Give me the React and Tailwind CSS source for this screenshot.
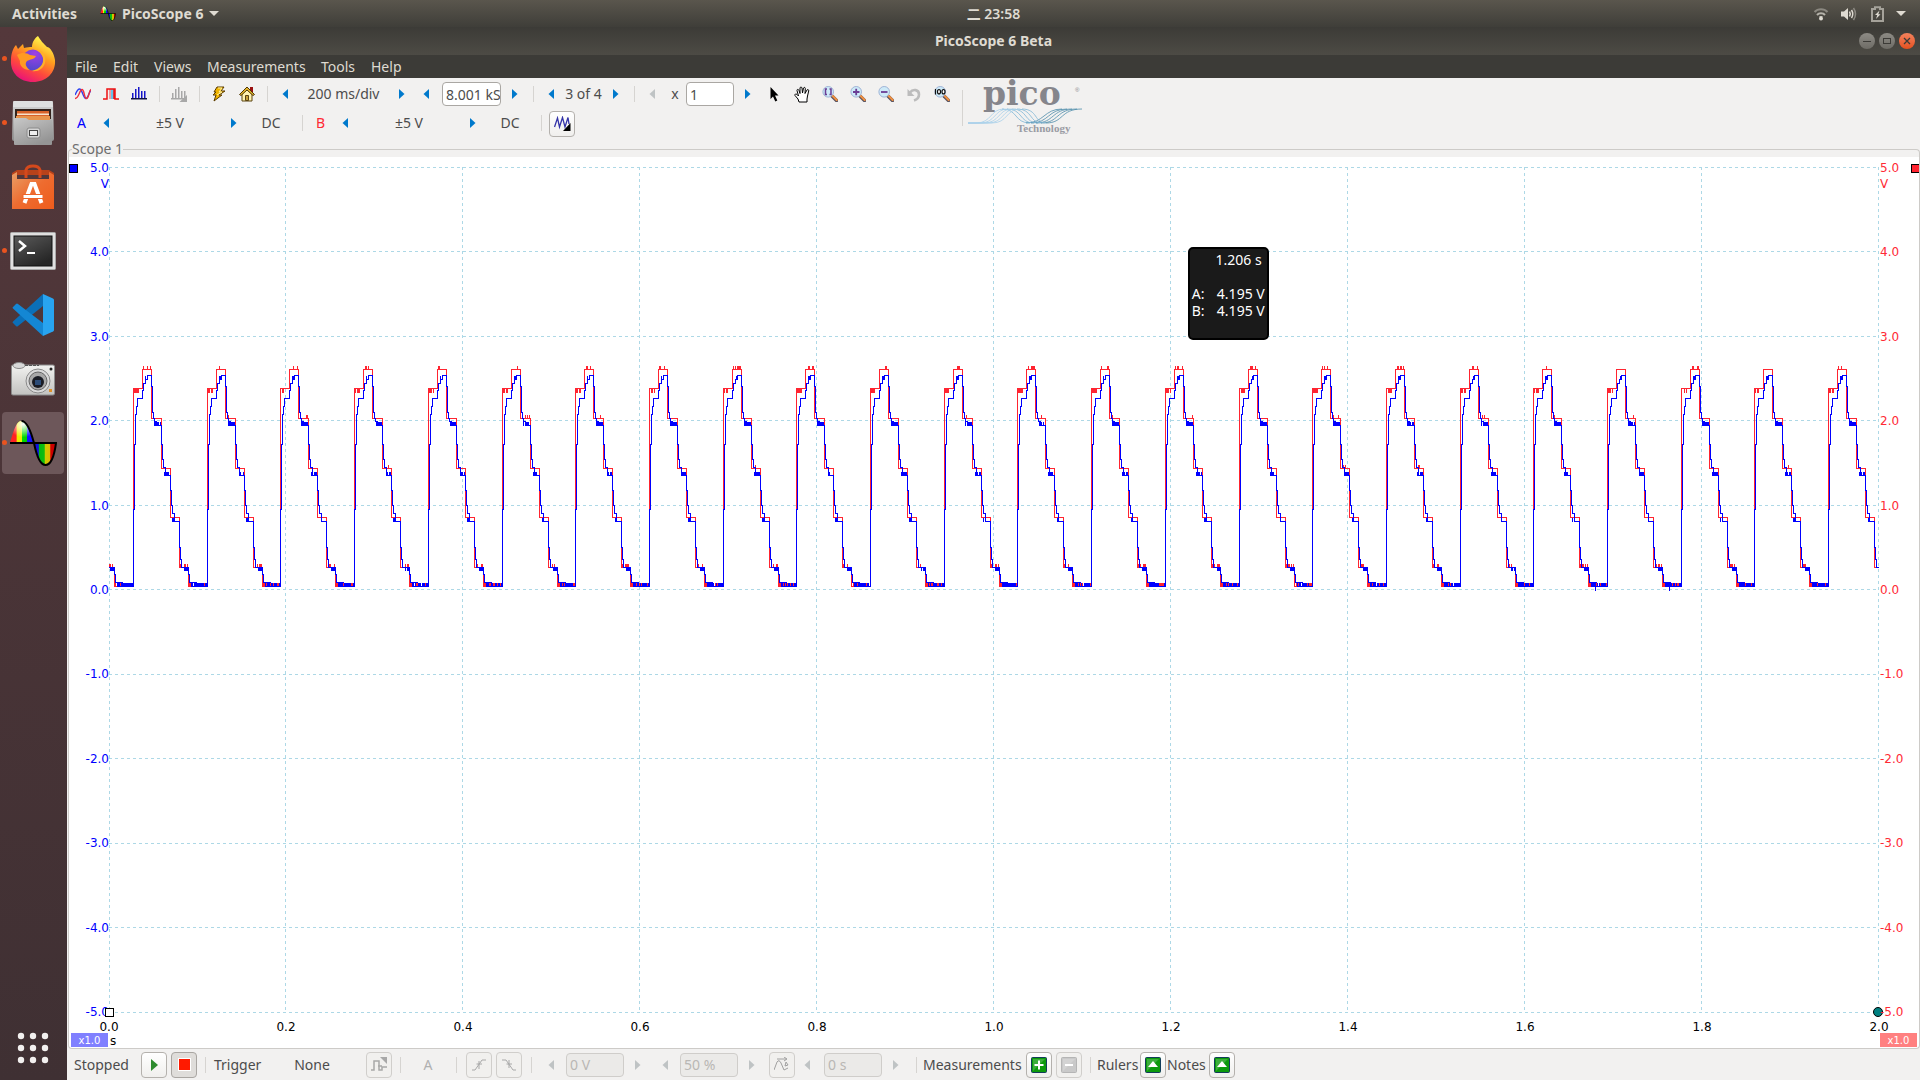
import React from "react";

const UI = "font-['Noto_Sans',sans-serif]";

/* ---------- waveform ---------- */
const PERIOD = 73.7;
const FIRST = 24;
const TOP = 167;

function makeRandom(seed) {
  let s = seed;
  return () => {
    s = (s * 16807) % 2147483647;
    return s / 2147483647;
  };
}

function buildTraces() {
  const rnd = makeRandom(4242);
  let red = "";
  let blue = "";
  const at = (x, y) => `${x + 0.5} ${Math.round(y) - TOP + 0.5}`;
  const noise = (x1, x2, y1, y2, density) => {
    let d = "";
    for (let x = x1; x < x2; x++) {
      if (rnd() < density) d += `M${at(x, y1)}V${y2 - TOP + 1}`;
    }
    return d;
  };
  const steps = (x0, pts) =>
    pts.map(([dx, y], i) => (i === 0 ? `M${at(x0 + dx, y)}` : `H${x0 + dx + 0.5}V${Math.round(y) - TOP + 0.5}`)).join("");

  for (let k = -1; k < 24; k++) {
    const x = Math.round(FIRST + PERIOD * k);
    const next = Math.round(FIRST + PERIOD * (k + 1)) - x;
    red += steps(x, [[0, 586], [0, 388], [9, 369], [18, 418], [28, 468], [37, 517], [46, 567], [55, 586], [next, 586]]);
    red += noise(x + 1, x + 6, 388, 392, 0.75);
    red += noise(x + 10, x + 18, 365, 369, 0.3);
    red += noise(x + 20, x + 28, 414, 418, 0.12);
    red += noise(x + 29, x + 36, 464, 468, 0.05);
    red += noise(x + 46, x + 55, 563, 567, 0.45);
    red += noise(x + 56, x + next, 582, 586, 0.9);
    blue += steps(x, [
      [0, 586], [0, 509], [1, 444], [2, 414], [3, 406], [4, 398], [9, 390], [10, 383], [12, 379], [14, 375],
      [18, 386], [19, 412], [20, 418], [21, 421], [23, 425], [28, 444], [29, 459], [30, 467], [32, 475],
      [37, 490], [38, 505], [39, 513], [41, 521], [46, 547], [47, 559], [48, 567], [55, 574], [56, 582], [58, 586], [next, 586],
    ]);
    blue += noise(x + 12, x + 15, 375, 379, 0.8);
    blue += noise(x + 21, x + 28, 421, 425, 0.9);
    blue += noise(x + 31, x + 37, 471, 475, 0.7);
    blue += noise(x + 39, x + 42, 517, 521, 0.6);
    blue += noise(x + 51, x + 55, 567, 570, 0.95);
    blue += noise(x + 58, x + next, 582, 586, 0.75);
    blue += `M${at(x + 57, 582)}H${x + 64}`;
    if (rnd() < 0.15) blue += `M${at(x + 62, 586)}v4`;
  }
  return { red, blue };
}
const TRACES = buildTraces();

function Plot() {
  return (
    <svg viewBox="0 0 1770 846" preserveAspectRatio="none" className="absolute inset-0 h-full w-full overflow-hidden" shapeRendering="crispEdges" fill="none" role="img" aria-label="Scope trace">
      <g stroke="#add8e6" strokeDasharray="3 3">
        {Array.from({ length: 11 }, (_, i) => (
          <line key={`h${i}`} x1="0" x2="1770" y1={Math.floor(i * 84.5) + 0.5} y2={Math.floor(i * 84.5) + 0.5} />
        ))}
        {Array.from({ length: 11 }, (_, i) => (
          <line key={`v${i}`} y1="0" y2="846" x1={Math.floor(i * 176.9) + 0.5} x2={Math.floor(i * 176.9) + 0.5} />
        ))}
      </g>
      <path d={TRACES.red} stroke="#ff2430" />
      <path d={TRACES.blue} stroke="#0000ff" />
    </svg>
  );
}

/* ---------- small controls ---------- */
function Sep({ tall }) {
  return (
    <span className="flex w-3 shrink-0 items-center justify-center">
      <span className={tall ? "h-9 w-px bg-[#d6d4d1]" : "h-4 w-px bg-[#d6d4d1]"} />
    </span>
  );
}

function Arrow({ dir, off, label }) {
  return (
    <button type="button" disabled={off} aria-label={label} className="flex w-6 shrink-0 items-center justify-center">
      <svg width="6" height="10" viewBox="0 0 6 10" fill={off ? "#bfc3c4" : "#0079cc"}>
        <path d={dir === "l" ? "M6 0V10L0.500 5Z" : "M0 0V10L5.500 5Z"} />
      </svg>
    </button>
  );
}

function Tool({ label, children }) {
  return (
    <button type="button" aria-label={label} className="flex h-6 w-7 shrink-0 items-center justify-center">
      {children}
    </button>
  );
}

function Push({ label, off, down, children }) {
  return (
    <button
      type="button"
      aria-label={label}
      disabled={off}
      className={
        "flex h-[26px] w-[26px] shrink-0 items-center justify-center rounded-[4px] border " +
        (off
          ? "border-[#d0cecb] bg-[#f1f0ee]"
          : down
          ? "border-[#a9a6a2] bg-[#dfddda]"
          : "border-[#b4b1ad] bg-linear-to-b from-white to-[#f0efed]")
      }
    >
      {children}
    </button>
  );
}

function OffField({ value, label }) {
  return (
    <input
      aria-label={label}
      defaultValue={value}
      disabled
      className="h-6 w-[58px] shrink-0 rounded-[4px] border border-[#cfcdca] bg-[#ebeae8] px-[3px] text-sm text-[#b9b7b4]"
    />
  );
}

/* ---------- toolbar icons ---------- */
const Sine = () => (
  <svg width="16" height="12" viewBox="0 0 16 12" fill="none" strokeWidth="1.400">
    <path d="M0 7C1.500 4 2.500 1 4.500 1C7.500 1 8 10.500 11 10.500C13 10.500 14 4 16 2" stroke="#2b3ff0" />
    <path d="M0 10.500C4 10.500 4.500 1.500 7 1.500S9 10.500 11.500 10.500C14 10.500 14 2.500 16 1.500" stroke="#f0303c" />
  </svg>
);
const Persist = () => (
  <svg width="16" height="12" viewBox="0 0 16 12" fill="none">
    <path d="M6 1h2v10h-2z" fill="#f49aa0" />
    <path d="M8 1h3v10h-3z" fill="#64c3ea" />
    <path d="M0 11H4V1H12V11H16M11 1V11" stroke="#ee1111" strokeWidth="1.500" />
  </svg>
);
const Bars = ({ color, corner }) => (
  <svg width="17" height="15" viewBox="0 0 17 15" fill={color}>
    <path d="M1 6h1.500v5H1zM4 2h1.500v9H4zM7 0h1.500v11H7zM10 4h1.500v7H10zM13 4h1.500v7H13z" />
    <path d="M0 11h16v1.500H0z" fill={corner ? color : "#111144"} />
    {corner && <path d="M16 8V15H8.500Z" />}
  </svg>
);
const Bolt = () => (
  <svg width="14" height="16" viewBox="0 0 14 16">
    <path d="M5 1H12L9 5H13L7 9H10L2 15L4 9H1L4 6H2Z" fill="#f0b400" stroke="#5a3a00" />
    <path d="M6 2H10L7 6H10L5 9" fill="none" stroke="#fff3a0" />
  </svg>
);
const House = () => (
  <svg width="16" height="16" viewBox="0 0 16 16">
    <path d="M11 1h3v6h-3z" fill="#9a1010" />
    <path d="M3 8V15H13V8L8 3Z" fill="#fff2b0" stroke="#5b4410" />
    <path d="M0.500 8.500L8 1L15.500 8.500L14 9.500L8 4L2 9.500Z" fill="#e6b42a" stroke="#4c3808" />
    <path d="M6.500 9.500h3v5h-3z" fill="#c9a13a" stroke="#5b4410" />
  </svg>
);
const Cursor = () => (
  <svg width="9" height="15" viewBox="0 0 9 15">
    <path d="M0.500 0V12L3 9.500L5.300 14.500L7.300 13.500L5 8.500H8.500Z" fill="#000" />
  </svg>
);
const Hand = () => (
  <svg width="17" height="17" viewBox="0 0 17 17">
    <path
      d="M5 16L4 13L1 9.500C0.500 8 2 7.500 3 8.500L4.500 10L3 4.500C3 3 4.500 3 5 4.500L6 7.500L6 2C6.200 0.700 7.700 0.700 8 2L8.500 7L9.500 2C10 1 11.300 1.300 11.300 2.500L11 7.500L13 4C13.700 3 15 3.700 14.700 5L13.500 10L13 13V16Z"
      fill="#fff" stroke="#000"
    />
  </svg>
);
function Lens({ mark }) {
  return (
    <svg width="16" height="16" viewBox="0 0 16 16" fill="none">
      <path d="M10 10L14.500 14.500" stroke="#5c5560" strokeWidth="3.500" strokeLinecap="round" />
      <path d="M10.500 9.700L14.700 14" stroke="#f09040" strokeWidth="2" strokeLinecap="round" />
      <circle cx="6.200" cy="5.800" r="5.300" fill="#cdeaf8" stroke="#9fb4d6" />
      {mark === "fit" && <path d="M5 3H3.500V8.500H5M7.500 3H9V8.500H7.500" stroke="#6a3d94" strokeWidth="1.500" />}
      {mark === "in" && <path d="M3 6H9.500M6.200 2.700V9.200" stroke="#6a3d94" strokeWidth="1.800" />}
      {mark === "out" && <path d="M3 6H9.500" stroke="#6a3d94" strokeWidth="1.800" />}
      {mark === "full" && (
        <g stroke="#111" strokeWidth="1.200">
          <path d="M1.500 3V8.500" />
          <ellipse cx="5" cy="5.700" rx="1.500" ry="2.200" fill="#fff" />
          <ellipse cx="9.500" cy="5.700" rx="1.500" ry="2.200" fill="#fff" />
        </g>
      )}
    </svg>
  );
}
const Undo = () => (
  <svg width="14" height="15" viewBox="0 0 14 15" fill="none">
    <path d="M3 5.500C6 1.500 12 2.500 12 7.500C12 10.500 10 12.500 7 13.500" stroke="#bcbcbc" strokeWidth="2.600" />
    <path d="M0.500 2V9H7.500Z" fill="#bcbcbc" />
  </svg>
);
const WaveCorner = () => (
  <svg width="17" height="15" viewBox="0 0 17 15" fill="none">
    <path d="M0.500 11L3.500 2L5.500 11L8.500 1.500L11 11L14 1.500L15 8" stroke="#3232a8" strokeWidth="1.300" />
    <path d="M16.500 7V15H9Z" fill="#000" />
  </svg>
);

function PicoLogo() {
  const lines = [0, 1, 2, 3, 4];
  return (
    <svg width="116" height="54" viewBox="0 0 116 54" fill="none" className="overflow-visible" aria-label="pico Technology" role="img">
      {lines.map((i) => (
        <g key={i} strokeWidth="0.800">
          <path d={`M0 41H${8 + i * 4}C${24 + i * 4} 41 ${22 + i * 4} 27 ${36 + i * 4} 27`} stroke="#a9d0ea" />
          <path d={`M${34 + i * 5} 27C${50 + i * 5} 27 ${46 + i * 5} 41 ${62 + i * 4} 41`} stroke="#7fb6d6" />
          <path d={`M${58 + i * 5} 41C${76 + i * 5} 41 ${76 + i * 4} 27 ${94 + i * 5} 27`} stroke="#4d8caa" />
        </g>
      ))}
      <text x="15" y="23" fontFamily="'DejaVu Serif', serif" fontWeight="bold" fontSize="33" fill="#85858b">pico</text>
      <text x="107" y="10" fontFamily="'Liberation Sans', sans-serif" fontSize="6" fill="#85858b">®</text>
      <text x="49" y="50" fontFamily="'Liberation Serif', serif" fontWeight="bold" fontSize="11" fill="#9a9ca4">Technology</text>
    </svg>
  );
}

/* ---------- dock icons ---------- */
function Rainbow({ width, height, id }) {
  return (
    <svg width={width} height={height} viewBox="0 0 48 46">
      <defs>
        <linearGradient id={id + "a"}>
          <stop offset="0.260" stopColor="#f22" />
          <stop offset="0.290" stopColor="#ee0" />
          <stop offset="0.480" stopColor="#e8f000" />
          <stop offset="0.510" stopColor="#0d0" />
          <stop offset="0.690" stopColor="#0c0" />
          <stop offset="0.720" stopColor="#11f" />
        </linearGradient>
        <linearGradient id={id + "b"}>
          <stop offset="0.200" stopColor="#11d" />
          <stop offset="0.230" stopColor="#0b1" />
          <stop offset="0.470" stopColor="#1b1" />
          <stop offset="0.500" stopColor="#cc0" />
          <stop offset="0.720" stopColor="#db0" />
          <stop offset="0.760" stopColor="#c00" />
        </linearGradient>
        <radialGradient id={id + "g"} cx="0.550" cy="0.150" r="0.600">
          <stop offset="0" stopColor="#fff" />
          <stop offset="1" stopColor="#fff" stopOpacity="0" />
        </radialGradient>
      </defs>
      <path d="M1 23C5 8 8 1 12.500 1S21 8 25 23Z" fill={`url(#${id}a)`} />
      <path d="M1 23C5 8 8 1 12.500 1S21 8 25 23Z" fill={`url(#${id}g)`} />
      <path d="M25 23C28 38 32 45 36.500 45S45 38 47 23Z" fill={`url(#${id}b)`} />
      <path d="M1 23H47C45 38 41 45 36.500 45S28 38 25 23C21 8 17 1 12.500 1" fill="none" stroke="#000" strokeWidth="2" />
    </svg>
  );
}

const Firefox = () => (
  <svg width="46" height="48" viewBox="0 0 46 48">
    <defs>
      <linearGradient id="ffo" x1="0.800" y1="0" x2="0.300" y2="1">
        <stop offset="0.100" stopColor="#fff04a" />
        <stop offset="0.400" stopColor="#ffa01e" />
        <stop offset="0.700" stopColor="#ff4a3c" />
        <stop offset="1" stopColor="#e8107c" />
      </linearGradient>
      <radialGradient id="ffp" cx="0.600" cy="0.200" r="0.900">
        <stop offset="0" stopColor="#a040e8" />
        <stop offset="1" stopColor="#4a48c8" />
      </radialGradient>
    </defs>
    <path d="M28 1C31 6 33 8 37 12C40 12 44 18 45 25C46 38 36 47 23 47S0 38 1 25C1 19 3 13 6 10L8 14L13 9L14 13C17 12 20 12 22 12C22 7 25 3 28 1Z" fill="url(#ffo)" />
    <circle cx="23" cy="25" r="10.500" fill="url(#ffp)" />
    <path d="M7 20C12 17 17 18 20 20L26 21C24 25 20 24 17 26C14 29 17 33 20 35C13 35 9 30 10 26Z" fill="#ff9a22" />
    <path d="M24 14C32 14 37 20 35 28C33 34 28 37 22 36C30 34 34 29 33 23C32 19 29 16 24 14Z" fill="#ffb02a" />
  </svg>
);

const Files = () => (
  <svg width="44" height="46" viewBox="0 0 44 46">
    <defs>
      <linearGradient id="fil" x2="0" y2="1">
        <stop offset="0" stopColor="#d8d8d8" />
        <stop offset="1" stopColor="#8f8f8f" />
      </linearGradient>
      <linearGradient id="fif" x2="0.600" y2="1">
        <stop offset="0" stopColor="#c8c8c8" />
        <stop offset="1" stopColor="#959595" />
      </linearGradient>
    </defs>
    <path d="M3 1H41Q42 1 42 2L43 39Q43 41 41 41H3Q1 41 1 39L2 2Q2 1 3 1Z" fill="url(#fil)" />
    <path d="M3 1H41L42 7H2Z" fill="#e0e0e0" />
    <path d="M4 9h36v10H4z" fill="#33231c" />
    <path d="M6 11h32v9H6z" fill="#d8622a" />
    <path d="M6 13.500h32v1.500H6z" fill="#f6e2cc" />
    <path d="M5 16h34v4H5z" fill="#e8944c" />
    <path d="M3 18H15L18 20H41V44Q41 45 40 45H4Q3 45 3 44Z" fill="url(#fif)" />
    <rect x="16" y="28" width="13" height="10" rx="2" fill="#d4d4d4" stroke="#8a8a8a" />
    <rect x="18.500" y="30.500" width="8" height="5" fill="#eee" stroke="#444" />
  </svg>
);

const Software = () => (
  <svg width="44" height="46" viewBox="0 0 44 46">
    <defs>
      <linearGradient id="sof" x2="1" y2="1">
        <stop offset="0" stopColor="#e8a068" />
        <stop offset="0.500" stopColor="#ee6c30" />
        <stop offset="1" stopColor="#ee5c1c" />
      </linearGradient>
    </defs>
    <path d="M1 9L6 6H38L43 9V11H1Z" fill="#b8421a" />
    <path d="M1 11L6 8V15H38V8L43 11V45H1Z" fill="url(#sof)" />
    <path d="M15 14V6Q16 2 22 2T29 6V14" fill="none" stroke="#d4491c" strokeWidth="3" />
    <path d="M13.500 39L20.500 20H23.500L30.500 39" fill="none" stroke="#fff" strokeWidth="4" />
    <path d="M12 30.500h20v4H12z" fill="#fff" stroke="#ee6428" strokeWidth="1" />
  </svg>
);

const Terminal = () => (
  <svg width="46" height="38" viewBox="0 0 46 38">
    <defs>
      <linearGradient id="ter" x2="0.600" y2="1">
        <stop offset="0" stopColor="#5a5a5a" />
        <stop offset="1" stopColor="#262626" />
      </linearGradient>
    </defs>
    <rect x="0.500" y="0.500" width="45" height="37" rx="1" fill="#e0e0e0" stroke="#aaa" />
    <rect x="4" y="4" width="38" height="30" fill="url(#ter)" stroke="#111" />
    <path d="M9 9L15 14L9 19" fill="none" stroke="#fff" strokeWidth="2.500" />
    <path d="M17 20h8v2h-8z" fill="#fff" />
  </svg>
);

const Code = () => (
  <svg width="44" height="44" viewBox="0 0 44 44">
    <path d="M2 30L5 33Q6 34 7 33L32 13V1L2 28.500Q1 29.500 2 30Z" fill="#0b6fb8" />
    <path d="M2 14L5 11Q6 10 7 11L32 30V43L2 15.500Q1 14.500 2 14Z" fill="#1487d4" />
    <path d="M32 1L42 5.500Q43 6 43 7V37Q43 38 42 38.500L32 43Z" fill="#28a4f0" />
  </svg>
);

const Camera = () => (
  <svg width="44" height="34" viewBox="0 0 44 34">
    <defs>
      <linearGradient id="cam" x2="0" y2="1">
        <stop offset="0" stopColor="#f2f2f0" />
        <stop offset="1" stopColor="#c2c2c0" />
      </linearGradient>
    </defs>
    <rect x="0.500" y="3" width="43" height="30" rx="1.500" fill="url(#cam)" stroke="#8c8c8c" />
    <ellipse cx="8" cy="3.500" rx="6" ry="3" fill="#d8d8d8" stroke="#8a8a8a" />
    <path d="M14 3.500H28" stroke="#555" strokeDasharray="3 1" />
    <circle cx="27" cy="19" r="12" fill="#dadada" stroke="#8a8a8a" />
    <circle cx="27" cy="19" r="9" fill="#a8a8a8" stroke="#666" />
    <circle cx="27" cy="20" r="6" fill="#1a1c24" />
    <rect x="24" y="18" width="6" height="5" fill="#2c4c78" />
    <circle cx="40" cy="7" r="1.500" fill="#222" />
    <rect x="38" y="27" width="3" height="3" fill="#e09028" />
  </svg>
);

function DockItem({ label, running, active, children }) {
  return (
    <button
      type="button"
      aria-label={label}
      className={"relative flex h-[62px] w-[62px] shrink-0 items-center justify-center rounded-[4px] " + (active ? "bg-[#6d575a]" : "")}
    >
      {running && <span className="absolute left-0 top-7 h-[5px] w-[5px] rounded-full bg-[#e95420]" />}
      {children}
    </button>
  );
}

function Dock() {
  return (
    <nav aria-label="Dock" className="flex w-[67px] shrink-0 flex-col items-start gap-0.5 bg-linear-to-b from-[#54383b] to-[#3f3033] pl-0.5 pt-px">
      <DockItem label="Firefox" running><Firefox /></DockItem>
      <DockItem label="Files" running><Files /></DockItem>
      <DockItem label="Ubuntu Software"><Software /></DockItem>
      <DockItem label="Terminal" running><Terminal /></DockItem>
      <DockItem label="Visual Studio Code"><Code /></DockItem>
      <DockItem label="Camera"><Camera /></DockItem>
      <DockItem label="PicoScope 6" running active><Rainbow width={48} height={46} id="dk" /></DockItem>
      <button type="button" aria-label="Show applications" className="mb-3.5 mt-auto flex h-9 w-[62px] items-center justify-center">
        <svg width="32" height="32" viewBox="0 0 32 32" fill="#f2f0ef">
          {[4, 16, 28].map((y) => [4, 16, 28].map((x) => <circle key={`${x}-${y}`} cx={x} cy={y} r="3.200" />))}
        </svg>
      </button>
    </nav>
  );
}

function TopBar() {
  return (
    <header className="relative flex h-[27px] shrink-0 items-center bg-linear-to-b from-[#5a564d] to-[#3f3e39] text-sm font-bold text-[#dfdbd2]">
      <button type="button" className="ml-3 w-[88px] text-left">Activities</button>
      <button type="button" className="flex items-center">
        <Rainbow width={16} height={15} id="tb" />
        <span className="ml-1.5">PicoScope 6</span>
        <svg width="10" height="5" className="ml-1.5" viewBox="0 0 10 5"><path d="M0 0H10L5 5Z" fill="#dfdbd2" /></svg>
      </button>
      <span className="absolute inset-y-0 left-[67px] right-0 flex items-center justify-center font-['Noto_Sans','Noto_Sans_CJK_SC',sans-serif] font-semibold">二 23:58</span>
      <div className="ml-auto mr-[14px] flex items-center">
        <svg width="16" height="14" viewBox="0 0 16 14" fill="none" strokeWidth="2" className="mr-3">
          <path d="M1.500 5C5 1.300 11 1.300 14.500 5" stroke="#8b8880" />
          <path d="M4 8C6 5.700 10 5.700 12 8" stroke="#b5b2aa" />
          <path d="M6 9.300h4L8 11z" fill="#dfdbd2" />
          <circle cx="8" cy="11.500" r="2" fill="#dfdbd2" />
        </svg>
        <svg width="16" height="14" viewBox="0 0 16 14" fill="none" className="mr-[14px]" stroke="#dfdbd2" strokeWidth="1.500">
          <path d="M0 4.500H3L7 1V13L3 9.500H0Z" fill="#dfdbd2" stroke="none" />
          <path d="M8.500 4.500Q10 7 8.500 9.500M10.500 3Q13 7 10.500 11" />
          <path d="M12.500 1Q16.500 7 12.500 13" stroke="#8b8880" />
        </svg>
        <svg width="13" height="16" viewBox="0 0 13 16" fill="none" className="mr-3">
          <path d="M1 3H4V1.200H9V3H12V15H1Z" stroke="#a5a29a" strokeWidth="2" />
          <path d="M8.500 4.500L4 9H6.300L5 13L9.500 8.200H7.300Z" fill="#dfdbd2" />
        </svg>
        <svg width="10" height="5" viewBox="0 0 10 5"><path d="M0 0H10L5 5Z" fill="#dfdbd2" /></svg>
      </div>
    </header>
  );
}

function TitleBar() {
  const base = "flex h-4 w-4 items-center justify-center rounded-full ";
  return (
    <div className="relative flex h-7 shrink-0 items-center justify-center bg-linear-to-b from-[#3c3b37] to-[#4d4b45] text-sm font-bold text-[#dfdbd2]">
      <h1>PicoScope 6 Beta</h1>
      <div className="absolute inset-y-0 right-[5px] flex items-center gap-1 text-[#3c3b37]">
        <button type="button" aria-label="Minimize" className={base + "bg-linear-to-b from-[#8d8b85] to-[#6e6c66]"}>
          <svg width="8" height="8" viewBox="0 0 8 8"><path d="M0 4.500H8" stroke="currentColor" /></svg>
        </button>
        <button type="button" aria-label="Maximize" className={base + "bg-linear-to-b from-[#8d8b85] to-[#6e6c66]"}>
          <svg width="8" height="8" viewBox="0 0 8 8"><rect x="0.500" y="1.500" width="7" height="5" fill="none" stroke="currentColor" /></svg>
        </button>
        <button type="button" aria-label="Close" className={base + "bg-linear-to-b from-[#f4825c] to-[#e4501c]"}>
          <svg width="8" height="8" viewBox="0 0 8 8"><path d="M1 1L7 7M7 1L1 7" stroke="currentColor" strokeWidth="1.300" /></svg>
        </button>
      </div>
    </div>
  );
}

function MenuBar() {
  const items = [
    ["File", "w-[38px]"],
    ["Edit", "w-[41px]"],
    ["Views", "w-[53px]"],
    ["Measurements", "w-[114px]"],
    ["Tools", "w-[50px]"],
    ["Help", "w-10"],
  ];
  return (
    <nav aria-label="Menu" className="flex h-[23px] shrink-0 items-center bg-[#3c3b37] pl-2 text-sm text-[#dfdbd2]">
      {items.map(([t, w]) => (
        <button key={t} type="button" className={w + " text-left"}>{t}</button>
      ))}
    </nav>
  );
}

function Channel({ name, color }) {
  return (
    <>
      <button type="button" className={"w-[25px] text-center " + color}>{name}</button>
      <Arrow dir="l" label={`Lower range ${name}`} />
      <button type="button" className="w-[104px] text-center">±5 V</button>
      <Arrow dir="r" label={`Raise range ${name}`} />
      <button type="button" className="w-[50px] text-center">DC</button>
      <Sep />
    </>
  );
}

function Toolbar() {
  return (
    <div className="flex shrink-0 text-sm text-[#4c4c4c]">
      <div className="pl-px">
        <div className="flex h-8 items-center">
          <Tool label="Scope mode"><Sine /></Tool>
          <Tool label="Persistence mode"><Persist /></Tool>
          <Tool label="Spectrum mode"><Bars color="#1414c8" /></Tool>
          <Sep />
          <Tool label="Spectrum options"><Bars color="#a8a8a8" corner /></Tool>
          <Sep />
          <Tool label="Auto setup"><Bolt /></Tool>
          <Tool label="Home"><House /></Tool>
          <Sep />
          <Arrow dir="l" label="Previous timebase" />
          <button type="button" className="w-[93px] text-center">200 ms/div</button>
          <Arrow dir="r" label="Next timebase" />
          <Arrow dir="l" label="Fewer samples" />
          <input aria-label="Samples" defaultValue="8.001 kS" className="ml-1 mr-0.5 h-6 w-[59px] rounded-[4px] border border-[#aaa7a3] bg-white pl-[3px] text-sm" />
          <Arrow dir="r" label="More samples" />
          <Sep />
          <Arrow dir="l" label="Previous buffer" />
          <span className="w-[41px] whitespace-nowrap text-center">3 of 4</span>
          <Arrow dir="r" label="Next buffer" />
          <Sep />
          <Arrow dir="l" off label="Less zoom" />
          <label htmlFor="zoomx" className="w-[22px] text-center">x</label>
          <input id="zoomx" defaultValue="1" className="mr-0.5 h-6 w-12 rounded-[4px] border border-[#aaa7a3] bg-white px-[3px] text-sm" />
          <Arrow dir="r" label="More zoom" />
          <Tool label="Select"><Cursor /></Tool>
          <Tool label="Pan"><Hand /></Tool>
          <Tool label="Zoom window"><Lens mark="fit" /></Tool>
          <Tool label="Zoom in"><Lens mark="in" /></Tool>
          <Tool label="Zoom out"><Lens mark="out" /></Tool>
          <Tool label="Undo zoom"><Undo /></Tool>
          <Tool label="Full view"><Lens mark="full" /></Tool>
        </div>
        <div className="mb-0.5 flex h-[26px] items-center">
          <Channel name="A" color="text-[#0000ff]" />
          <Channel name="B" color="text-[#ff2a35]" />
          <span className="ml-0.5 pt-px"><Push label="Signal generator"><WaveCorner /></Push></span>
        </div>
      </div>
      <Sep tall />
      <div className="pt-1"><PicoLogo /></div>
    </div>
  );
}

function AxisLabels({ side }) {
  const values = ["5.0", "4.0", "3.0", "2.0", "1.0", "0.0", "-1.0", "-2.0", "-3.0", "-4.0", "-5.0"];
  const left = side === "left";
  return (
    <ul className={"relative flex flex-col justify-between text-xs " + (left ? "items-end text-[#0000ff]" : "items-start pl-px text-[#ff2a35]")}>
      {values.map((v) => (
        <li key={v} className="flex h-0.5 items-center">{v}</li>
      ))}
      <li className={"absolute top-[9px] " + (left ? "right-0" : "left-px")}>V</li>
      <li aria-hidden="true" className={"absolute -top-[3px] h-[9px] border border-black " + (left ? "left-0 w-[9px] bg-[#0000ff]" : "right-0 w-2 border-r-0 bg-[#ff2430]")} />
    </ul>
  );
}

function Scope() {
  const times = ["0.0", "0.2", "0.4", "0.6", "0.8", "1.0", "1.2", "1.4", "1.6", "1.8", "2.0"];
  return (
    <section aria-label="Scope 1" className="flex flex-1 flex-col">
      <div className="flex h-[19px] shrink-0 items-end">
        <span className="h-2 w-1 rounded-tl-[4px] border-l border-t border-[#cdcbc8]" />
        <h2 className="flex h-4 items-center whitespace-nowrap text-sm text-[#6e6e6e]">Scope 1</h2>
        <span className="h-2 flex-1 rounded-tr-[4px] border-r border-t border-[#cdcbc8]" />
      </div>
      <div className="grid flex-1 grid-cols-[40px_1fr_40px] grid-rows-[1fr_35px] rounded-b-[4px] border-x border-b border-[#cdcbc8] bg-white pt-2.5 font-['DejaVu_Sans',sans-serif]">
        <AxisLabels side="left" />
        <div className="relative">
          <Plot />
          <span className="absolute -bottom-1 -left-1 h-[9px] w-[9px] border border-black bg-white" />
          <span className="absolute -bottom-1 -right-1 h-[10px] w-[10px] rounded-full border border-black bg-[#008080]" />
          <div className={"absolute left-[61%] top-20 -ml-px h-[93px] w-[81px] rounded-[5px] border-2 border-black bg-[#1a1a1a] px-0.5 pt-0.5 text-sm leading-[17px] text-white " + UI}>
            <p className="mb-[17px] pr-[3px] text-right">1.206 s</p>
            <p className="flex justify-between"><span>A:</span><span>4.195 V</span></p>
            <p className="flex justify-between"><span>B:</span><span>4.195 V</span></p>
          </div>
        </div>
        <AxisLabels side="right" />
        <div className="relative">
          <span className="absolute bottom-px left-0.5 flex h-[14px] w-[37px] items-center justify-center bg-[#8080ff] text-[10px] text-white">x1.0</span>
        </div>
        <div className="relative text-xs text-black">
          <ul className="flex h-[27px] items-center justify-between">
            {times.map((t) => (
              <li key={t} className="flex w-0 justify-center">{t}</li>
            ))}
          </ul>
          <span className="absolute left-px top-5">s</span>
        </div>
        <div className="relative">
          <span className="absolute bottom-px right-0.5 flex h-[14px] w-[37px] items-center justify-center bg-[#ff8080] text-[10px] text-white">x1.0</span>
        </div>
      </div>
    </section>
  );
}

const GreenBox = ({ mark, off }) => (
  <svg width="16" height="16" viewBox="0 0 16 16">
    <rect x="0.500" y="0.500" width="15" height="15" rx="1" fill={off ? "#c9c9c9" : "#0c9a0c"} stroke={off ? "#b5b5b5" : "#123c5a"} />
    <path d="M2 2H14L2 14Z" fill="#fff" opacity="0.200" />
    {mark === "+" && <path d="M8 3.500V12.500M3.500 8H12.500" stroke="#fff" strokeWidth="2" />}
    {mark === "-" && <path d="M4 8H12" stroke="#fff" strokeWidth="2" />}
    {mark === "up" && <path d="M8 4L13 10H3Z" fill="#fff" />}
  </svg>
);

function StatusBar() {
  return (
    <footer className="flex h-[31px] shrink-0 items-center whitespace-nowrap pl-[6px] text-sm text-[#4c4c4c]">
      <span className="w-[67px]">Stopped</span>
      <Push label="Start"><svg width="9" height="12" viewBox="0 0 9 12"><path d="M1 0L8 6L1 12Z" fill="#2e8b2e" /></svg></Push>
      <span className="ml-1"><Push label="Stop" down><span className="h-[11px] w-[11px] bg-[#ff1a00] ring-1 ring-white" /></Push></span>
      <span className="ml-0.5 mr-[3px]"><Sep /></span>
      <span className="w-[70px]">Trigger</span>
      <button type="button" className="w-14 text-center">None</button>
      <span className="ml-[26px]">
        <Push label="Advanced triggers" off>
          <svg width="17" height="15" viewBox="0 0 17 15" fill="none"><path d="M0 13H3V4H8V13H11V10H16M7 9h4" stroke="#a8a8a8" strokeWidth="1.500" /><path d="M9 0H16V7Z" fill="#a8a8a8" /></svg>
        </Push>
      </span>
      <span className="ml-0.5"><Sep /></span>
      <button type="button" disabled className="w-11 text-center text-[#b0b0b0]">A</button>
      <Sep />
      <span className="ml-1 flex gap-1">
        <Push label="Rising edge" off>
          <svg width="15" height="15" viewBox="0 0 15 15" fill="none" stroke="#a8a8a8"><path d="M0 13H3L10 3H14M7 4V12M4.500 7H10" /></svg>
        </Push>
        <Push label="Falling edge" off>
          <svg width="15" height="15" viewBox="0 0 15 15" fill="none" stroke="#a8a8a8"><path d="M0 3H4L11 13H14M7 3V11M4.500 7H10" /></svg>
        </Push>
      </span>
      <span className="ml-[3px] mr-0.5"><Sep /></span>
      <Arrow dir="l" off label="Lower threshold" />
      <span className="ml-[3px]"><OffField value="0 V" label="Threshold" /></span>
      <span className="ml-0.5 mr-[3px]"><Arrow dir="r" off label="Raise threshold" /></span>
      <Arrow dir="l" off label="Less pre-trigger" />
      <span className="ml-[3px]"><OffField value="50 %" label="Pre-trigger" /></span>
      <span className="ml-0.5"><Arrow dir="r" off label="More pre-trigger" /></span>
      <span className="ml-[5px]">
        <Push label="Trigger delay" off>
          <svg width="16" height="15" viewBox="0 0 16 15" fill="none" stroke="#a0a0a0"><path d="M0 13L3 5Q5 2 7 6L10 13L14 11M3 2H12M10 0L13 2L10 4M12 5L14 8L11 9Z" /></svg>
        </Push>
      </span>
      <Arrow dir="l" off label="Less delay" />
      <span className="ml-[5px]"><OffField value="0 s" label="Delay" /></span>
      <span className="mx-0.5"><Arrow dir="r" off label="More delay" /></span>
      <Sep />
      <span className="w-[104px] pl-px">Measurements</span>
      <Push label="Add measurement"><GreenBox mark="+" /></Push>
      <span className="ml-1"><Push label="Delete measurement" off><GreenBox mark="-" off /></Push></span>
      <span className="ml-0.5"><Sep /></span>
      <span className="w-11 pl-px">Rulers</span>
      <Push label="Show rulers"><GreenBox mark="up" /></Push>
      <span className="w-[43px] pl-px">Notes</span>
      <Push label="Show notes"><GreenBox mark="up" /></Push>
    </footer>
  );
}

export default function App() {
  return (
    <div className={"flex min-h-screen flex-col bg-[#f2f1f0] " + UI}>
      <TopBar />
      <div className="flex flex-1">
        <Dock />
        <main className="flex min-w-0 flex-1 flex-col">
          <TitleBar />
          <MenuBar />
          <div className="flex flex-1 flex-col pl-px">
            <Toolbar />
            <Scope />
            <StatusBar />
          </div>
        </main>
      </div>
    </div>
  );
}
